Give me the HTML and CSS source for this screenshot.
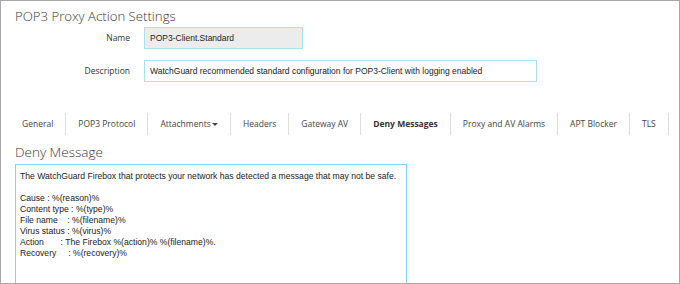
FILE: index.html
```html
<!DOCTYPE html>
<html lang="en">
<head>
    <meta charset="UTF-8">
    <title>POP3 Proxy Action Settings</title>
    <link rel="stylesheet" href="styles.css">
</head>
<body>
    <div class="frame">
        <h1>POP3 Proxy Action Settings</h1>
        <div class="form">
            <label for="action_name">Name</label>
            <input type="text" id="action_name" class="name" value="POP3-Client.Standard" readonly>
            <label for="action_desc">Description</label>
            <input type="text" id="action_desc" class="desc" value="WatchGuard recommended standard configuration for POP3-Client with logging enabled">
        </div>
        <ul class="tabs">
            <li>General</li>
            <li>POP3 Protocol</li>
            <li>Attachments <span class="caret"></span></li>
            <li>Headers</li>
            <li>Gateway AV</li>
            <li class="active">Deny Messages</li>
            <li>Proxy and AV Alarms</li>
            <li>APT Blocker</li>
            <li>TLS</li>
        </ul>
        <h2>Deny Message</h2>
        <textarea class="message">The WatchGuard Firebox that protects your network has detected a message that may not be safe.

Cause : %(reason)%
Content type : %(type)%
File name    : %(filename)%
Virus status : %(virus)%
Action       : The Firebox %(action)% %(filename)%.
Recovery     : %(recovery)%</textarea>
    </div>
</body>
</html>
```

FILE: styles.css
```css
body { margin: 0; padding: 0; background: #fff; font-family: "Open Sans", sans-serif; color: #333; }
.frame { height: 284px; box-sizing: border-box; border: 1px solid #a8a8a8; padding: 7px 0 0 14px; overflow: hidden; }
h1 { margin: 0 0 3px; font-size: 13.2px; line-height: 16px; font-weight: 300; color: #3a3a3a; }
h2 { margin: 9px 0 4px; font-size: 13.5px; line-height: 16px; font-weight: 300; color: #3a3a3a; }
.form { display: grid; grid-template-columns: 115px auto; column-gap: 14px; row-gap: 11px; align-items: center; }
.form label { text-align: right; font-size: 8.5px; line-height: 12px; color: #333; }
.form input { font-family: "Liberation Sans", Arial, sans-serif; font-size: 8.5px; color: #222; height: 22px; box-sizing: border-box; border: 1px solid #a9e2ef; padding: 0 5px; margin: 0; outline: none; }
.form input.name { width: 159px; background: #ececec; }
.form input.desc { width: 393px; background: #fff; }
.tabs { list-style: none; display: flex; margin: 31px 0 0 -5px; padding: 0; }
.tabs li { flex-shrink: 0; white-space: nowrap; font-size: 8.5px; color: #444; padding: 0 12px; line-height: 22px; border-right: 1px solid #ddd; }
.tabs li.active { font-weight: 700; color: #333; }
.caret { display: inline-block; width: 0; height: 0; border-left: 3px solid transparent; border-right: 3px solid transparent; border-top: 3px solid #444; vertical-align: middle; margin-left: -1px; }
.message { display: block; width: 392px; height: 130px; box-sizing: border-box; border: 1px solid #7fd6ee; padding: 6px 4px; margin: 0; font-family: "Liberation Sans", Arial, sans-serif; font-size: 8.6px; line-height: 11px; color: #222; resize: none; outline: none; white-space: pre-wrap; }
```
